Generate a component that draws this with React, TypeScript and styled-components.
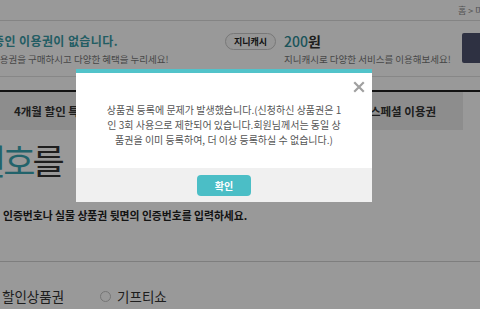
import styled, { createGlobalStyle } from "styled-components";

const GlobalStyle = createGlobalStyle`
  html, body {
    margin: 0;
    padding: 0;
    background: #fff;
    overflow: hidden;
  }
  body {
    font-family: "Noto Sans CJK KR", "Noto Sans", sans-serif;
    color: #222;
  }
`

const Page = styled.div`
  width: 480px;
  height: 309px;
  overflow: hidden;
`

const TopBar = styled.div`
  height: 20px;
  border-bottom: 1px solid #ddd;
  display: flex;
  justify-content: flex-end;
  align-items: center;
`

const Crumb = styled.span`
  font-size: 9px;
  color: #888;
  white-space: nowrap;
  width: 22px;
  overflow: hidden;
`

const InfoRow = styled.div`
  height: 56px;
  border-bottom: 1px solid #e2e2e2;
  display: flex;
  align-items: flex-start;
  padding-top: 12px;
  box-sizing: border-box;
`

const TicketBlock = styled.div`
  width: 225px;
  flex-shrink: 0;
  overflow: hidden;
  white-space: nowrap;
`

const TicketTitle = styled.div`
  margin-left: -7px;
  font-size: 12px;
  font-weight: 700;
  color: #3a9ba6;
  letter-spacing: 0.4px;
  line-height: 16px;
`

const SubText = styled.div<{ $shift?: number }>`
  margin-left: ${p => p.$shift ?? 0}px;
  margin-top: 4px;
  font-size: 9.5px;
  color: #777;
  line-height: 12px;
`

const CashPill = styled.div`
  flex-shrink: 0;
  width: 51px;
  height: 17px;
  box-sizing: border-box;
  border: 1px solid #c8c8c8;
  border-radius: 9px;
  background: #fafafa;
  font-size: 9px;
  font-weight: 700;
  color: #222;
  display: flex;
  align-items: center;
  justify-content: center;
`

const CashBlock = styled.div`
  margin-left: 8px;
  flex: 1;
  white-space: nowrap;
`

const CashAmount = styled.div`
  font-size: 14px;
  line-height: 16px;
  color: #2f8c96;
  font-weight: 500;

  b {
    color: #333;
    font-weight: 700;
  }
`

const DarkButton = styled.div`
  flex-shrink: 0;
  width: 18px;
  height: 30px;
  background: #4e536e;
  border-radius: 2px 0 0 2px;
`

const TabBar = styled.div`
  margin-top: 13px;
  border-top: 2px solid #1e1e1e;
  display: grid;
  grid-template-columns: 1fr 1fr 120px 17px;
  height: 38px;
`

const Tab = styled.div<{ $left?: boolean; $blank?: boolean }>`
  background: ${p => (p.$blank ? "#fff" : "#ececec")};
  display: flex;
  align-items: center;
  justify-content: ${p => (p.$left ? "flex-start" : "center")};
  padding-left: ${p => (p.$left ? "14px" : "0")};
  font-size: 11.5px;
  font-weight: 700;
  color: #333;
  white-space: nowrap;
  overflow: hidden;
`

const Heading = styled.h1`
  margin: 8px 0 0 -26px;
  font-size: 35px;
  letter-spacing: -3px;
  font-weight: 400;
  line-height: 44px;
  color: #333;
  white-space: nowrap;

  em {
    font-style: normal;
    color: #3aa6b2;
  }
`

const Guide = styled.p`
  margin: 25px 0 0 3px;
  font-size: 10.8px;
  font-weight: 700;
  color: #222;
  white-space: nowrap;
`

const Divider = styled.div`
  margin-top: 38px;
  height: 1px;
  background: #d2d2d2;
`

const RadioRow = styled.div`
  margin-top: 24px;
  display: flex;
  align-items: center;
  font-size: 13.5px;
  color: #333;
  white-space: nowrap;
`

const RadioLabel = styled.label`
  display: flex;
  align-items: center;
  gap: 6px;
  margin-left: 2px;

  & + & {
    margin-left: 36px;
  }
`

const RadioDot = styled.span`
  width: 11px;
  height: 11px;
  border-radius: 50%;
  border: 1px solid #c4c4c4;
  background: #fff;
  box-sizing: border-box;
`

const Overlay = styled.div`
  position: fixed;
  inset: 0;
  background: rgba(0, 0, 0, 0.4);
`

const Modal = styled.div`
  position: absolute;
  left: 76px;
  top: 69px;
  width: 296px;
  background: #fff;
  border-top: 4px solid #52c3ca;
`

const ModalBody = styled.div`
  position: relative;
  height: 95px;
  padding-top: 29px;
  box-sizing: border-box;
`

const CloseButton = styled.button`
  position: absolute;
  top: 8px;
  right: 7px;
  width: 12px;
  height: 12px;
  padding: 0;
  border: none;
  background: none;
  display: flex;
`

const Message = styled.p`
  margin: 0;
  text-align: center;
  font-size: 10px;
  line-height: 15px;
  color: #555;
  white-space: nowrap;
`

const ModalFooter = styled.div`
  height: 34px;
  background: #f0f0f0;
  display: flex;
  justify-content: center;
  align-items: center;
`

const ConfirmButton = styled.button`
  width: 54px;
  height: 21px;
  border: none;
  border-radius: 4px;
  background: #4bbec6;
  color: #fff;
  font-family: inherit;
  font-size: 10px;
  font-weight: 700;
  padding: 0;
`

const App = () => {
  return <>
    <GlobalStyle/>
    <Page>
      <TopBar>
        <Crumb>홈 &gt; 마이뮤직</Crumb>
      </TopBar>
      <InfoRow>
        <TicketBlock>
          <TicketTitle>중인 이용권이 없습니다.</TicketTitle>
          <SubText $shift={-9}>이용권을 구매하시고 다양한 혜택을 누리세요!</SubText>
        </TicketBlock>
        <CashPill>지니캐시</CashPill>
        <CashBlock>
          <CashAmount>200<b>원</b></CashAmount>
          <SubText>지니캐시로 다양한 서비스를 이용해보세요!</SubText>
        </CashBlock>
        <DarkButton/>
      </InfoRow>
      <TabBar>
        <Tab $left>4개월 할인 특별 이용권</Tab>
        <Tab>선물 이용권</Tab>
        <Tab>스페셜 이용권</Tab>
        <Tab $blank/>
      </TabBar>
      <Heading><em>번호</em>를</Heading>
      <Guide>인증번호나 실물 상품권 뒷면의 인증번호를 입력하세요.</Guide>
      <Divider/>
      <RadioRow>
        <RadioLabel>할인상품권</RadioLabel>
        <RadioLabel><RadioDot/>기프티쇼</RadioLabel>
      </RadioRow>
    </Page>
    <Overlay>
      <Modal>
        <ModalBody>
          <CloseButton aria-label="닫기">
            <svg width="12" height="12" viewBox="0 0 12 12">
              <path d="M2 2 L10 10 M10 2 L2 10" stroke="#a0a0a0" strokeWidth="2.2" strokeLinecap="square"/>
            </svg>
          </CloseButton>
          <Message>
            상품권 등록에 문제가 발생했습니다.(신청하신 상품권은 1<br/>
            인 3회 사용으로 제한되어 있습니다.회원님께서는 동일 상<br/>
            품권을 이미 등록하여, 더 이상 등록하실 수 없습니다.)
          </Message>
        </ModalBody>
        <ModalFooter>
          <ConfirmButton>확인</ConfirmButton>
        </ModalFooter>
      </Modal>
    </Overlay>
  </>
}

export default App
